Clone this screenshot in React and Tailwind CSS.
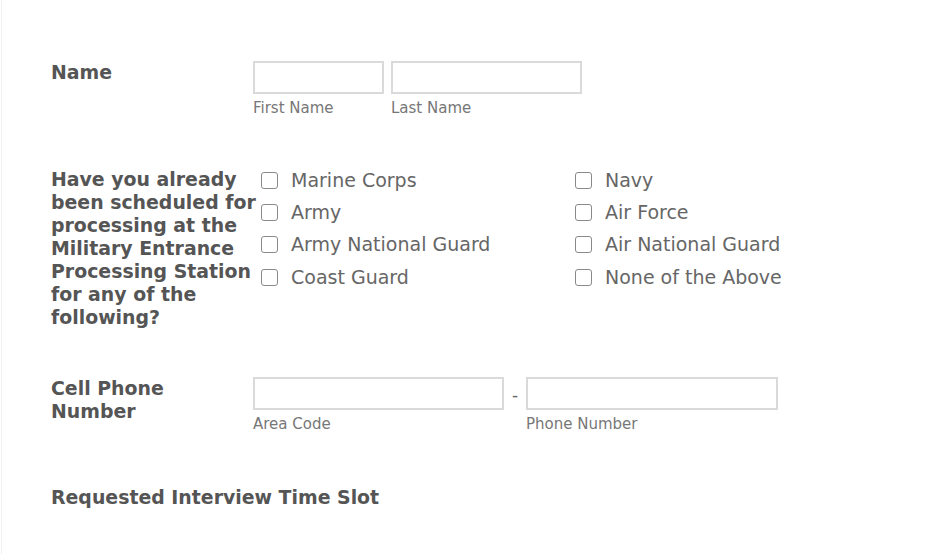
import React from 'react';

const font = { fontFamily: '"DejaVu Sans", Verdana, sans-serif' };

const Field = ({ width, label }) => (
  <div className="flex flex-col">
    <input
      type="text"
      className="h-[33px] border-2 border-[#dadada] bg-white outline-none"
      style={{ width }}
    />
    <span className="mt-[5px] text-[15px] leading-[18px] text-[#777]">{label}</span>
  </div>
);

const Check = ({ label }) => (
  <label className="flex h-[32.3px] items-center pl-2">
    <span className="h-[17px] w-[17px] rounded-[3px] border-[1.5px] border-[#8a8a8a] bg-white"></span>
    <span className="ml-[13px] text-[19px] leading-none text-[#666]">{label}</span>
  </label>
);

const branches = [
  'Marine Corps',
  'Navy',
  'Army',
  'Air Force',
  'Army National Guard',
  'Air National Guard',
  'Coast Guard',
  'None of the Above',
];

export default function App() {
  return (
    <div className="min-h-[554px] bg-white pl-px" style={font}>
      <div className="min-h-[554px] border-l border-[#f0f0f0] pl-[49px] pt-[61px]">
        {/* Name */}
        <div className="flex">
          <div className="w-[202px] text-[18.9px] font-bold leading-[23px] text-[#555]">Name</div>
          <div className="flex gap-[7px]">
            <Field width={131} label="First Name" />
            <Field width={191} label="Last Name" />
          </div>
        </div>

        {/* Military processing question */}
        <div className="mt-[51px] flex">
          <div className="w-[202px] shrink-0 whitespace-nowrap text-[18.9px] font-bold leading-[23px] text-[#555]">
            Have you already<br />
            been scheduled for<br />
            processing at the<br />
            Military Entrance<br />
            Processing Station<br />
            for any of the<br />
            following?
          </div>
          <div className="-mt-[4px] grid grid-cols-[314px_314px] content-start">
            {branches.map((b) => (
              <Check key={b} label={b} />
            ))}
          </div>
        </div>

        {/* Cell phone */}
        <div className="mt-[48px] flex">
          <div className="w-[202px] text-[18.9px] font-bold leading-[23px] text-[#555]">
            Cell Phone<br />
            Number
          </div>
          <div className="flex">
            <Field width={251} label="Area Code" />
            <span className="w-[22px] pt-[6px] text-center text-[17px] text-[#666]">-</span>
            <Field width={252} label="Phone Number" />
          </div>
        </div>

        {/* Interview slot */}
        <div className="mt-[53px] text-[18.9px] font-bold leading-[23px] text-[#555]">
          Requested Interview Time Slot
        </div>
      </div>
    </div>
  );
}
